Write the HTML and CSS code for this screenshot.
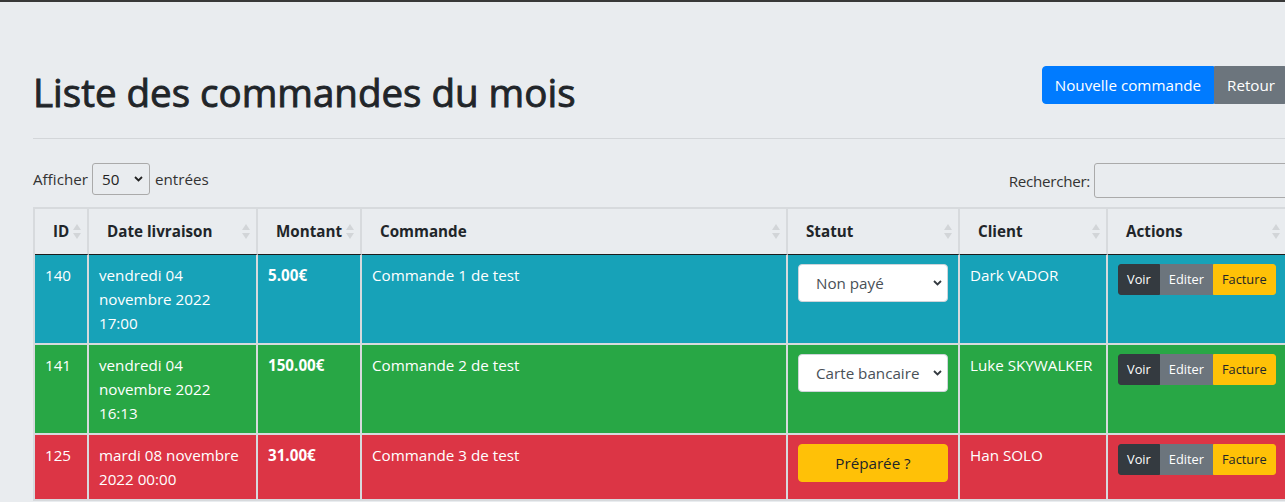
FILE: index.html
```html
<!DOCTYPE html>
<html lang="fr">
<head>
<meta charset="utf-8">
<title>Liste des commandes du mois</title>
<link rel="stylesheet" href="styles.css">
</head>
<body>
<div class="topbar"></div>
<main class="page">
  <header class="page-head">
    <h1 class="title">Liste des commandes du mois</h1>
    <div class="btn-group">
      <a class="btn btn-primary">Nouvelle commande</a>
      <a class="btn btn-secondary">Retour</a>
    </div>
  </header>

  <div class="controls">
    <label class="length">Afficher
      <span class="sel-wrap sel-len">
        <select class="len-select"><option>50</option></select>
        <svg class="chev" width="9" height="6" viewBox="0 0 9 6"><path d="M1 1l3.5 3.5L8 1" fill="none" stroke="#222" stroke-width="1.8"/></svg>
      </span>
      entrées</label>
    <label class="search">Rechercher:<input class="search-input" type="search"></label>
  </div>

  <table class="orders">
    <thead>
      <tr>
        <th class="c-id"><div class="th-in"><span>ID</span><svg class="sort" width="8" height="17" viewBox="0 0 8 17"><polygon points="0,7 4,1 8,7"/><polygon points="0,10 4,16 8,10"/></svg></div></th>
        <th class="c-date"><div class="th-in"><span>Date livraison</span><svg class="sort" width="8" height="17" viewBox="0 0 8 17"><polygon points="0,7 4,1 8,7"/><polygon points="0,10 4,16 8,10"/></svg></div></th>
        <th class="c-amount"><div class="th-in"><span>Montant</span><svg class="sort" width="8" height="17" viewBox="0 0 8 17"><polygon points="0,7 4,1 8,7"/><polygon points="0,10 4,16 8,10"/></svg></div></th>
        <th class="c-order"><div class="th-in"><span>Commande</span><svg class="sort" width="8" height="17" viewBox="0 0 8 17"><polygon points="0,7 4,1 8,7"/><polygon points="0,10 4,16 8,10"/></svg></div></th>
        <th class="c-status"><div class="th-in"><span>Statut</span><svg class="sort" width="8" height="17" viewBox="0 0 8 17"><polygon points="0,7 4,1 8,7"/><polygon points="0,10 4,16 8,10"/></svg></div></th>
        <th class="c-client"><div class="th-in"><span>Client</span><svg class="sort" width="8" height="17" viewBox="0 0 8 17"><polygon points="0,7 4,1 8,7"/><polygon points="0,10 4,16 8,10"/></svg></div></th>
        <th class="c-actions"><div class="th-in"><span>Actions</span><svg class="sort" width="8" height="17" viewBox="0 0 8 17"><polygon points="0,7 4,1 8,7"/><polygon points="0,10 4,16 8,10"/></svg></div></th>
      </tr>
    </thead>
    <tbody>
      <tr class="r-info">
        <td>140</td>
        <td>vendredi 04 novembre 2022 17:00</td>
        <td class="amount">5.00€</td>
        <td>Commande 1 de test</td>
        <td>
          <span class="sel-wrap sel-status">
            <select class="status-select"><option>Non payé</option></select>
            <svg class="chev" width="9" height="6" viewBox="0 0 9 6"><path d="M1 1l3.5 3.5L8 1" fill="none" stroke="#343a40" stroke-width="1.8"/></svg>
          </span>
        </td>
        <td class="client">Dark VADOR</td>
        <td><div class="act-group"><a class="sbtn sbtn-dark">Voir</a><a class="sbtn sbtn-gray">Editer</a><a class="sbtn sbtn-warn">Facture</a></div></td>
      </tr>
      <tr class="r-success">
        <td>141</td>
        <td>vendredi 04 novembre 2022 16:13</td>
        <td class="amount">150.00€</td>
        <td>Commande 2 de test</td>
        <td>
          <span class="sel-wrap sel-status">
            <select class="status-select"><option>Carte bancaire</option></select>
            <svg class="chev" width="9" height="6" viewBox="0 0 9 6"><path d="M1 1l3.5 3.5L8 1" fill="none" stroke="#343a40" stroke-width="1.8"/></svg>
          </span>
        </td>
        <td class="client">Luke SKYWALKER</td>
        <td><div class="act-group"><a class="sbtn sbtn-dark">Voir</a><a class="sbtn sbtn-gray">Editer</a><a class="sbtn sbtn-warn">Facture</a></div></td>
      </tr>
      <tr class="r-danger">
        <td>125</td>
        <td>mardi 08 novembre 2022 00:00</td>
        <td class="amount">31.00€</td>
        <td>Commande 3 de test</td>
        <td><a class="prep-btn">Préparée ?</a></td>
        <td class="client">Han SOLO</td>
        <td><div class="act-group"><a class="sbtn sbtn-dark">Voir</a><a class="sbtn sbtn-gray">Editer</a><a class="sbtn sbtn-warn">Facture</a></div></td>
      </tr>
    </tbody>
  </table>
</main>
</body>
</html>
```

FILE: styles.css
```css
* { box-sizing: border-box; }

html, body {
  margin: 0;
  overflow: hidden;
  background: #e9ecef;
}

body {
  font-family: "Open Sans", "Noto Sans", sans-serif;
  font-size: 15.2px;
  line-height: 24px;
  color: #212529;
}

.topbar {
  height: 2px;
  background: #383838;
}

.page {
  width: 1288px;
  padding: 64px 0 0 33px;
}

/* Title row */
.page-head {
  display: flex;
  justify-content: space-between;
  align-items: flex-start;
  border-bottom: 1px solid #d3d6d9;
}

.title {
  margin: 3px 0 23px;
  font-size: 38.5px;
  line-height: 46px;
  font-weight: 500;
  color: #212529;
  -webkit-text-stroke: 0.9px #212529;
}

.btn-group {
  display: flex;
}

.btn {
  display: inline-block;
  padding: 6px 12px;
  font-size: 15.2px;
  line-height: 24px;
  border: 1px solid transparent;
  color: #fff;
  white-space: nowrap;
}

.btn-primary {
  background: #007bff;
  border-color: #007bff;
  border-radius: 4px 0 0 4px;
}

.btn-secondary {
  background: #6c757d;
  border-color: #6c757d;
  border-radius: 0 4px 4px 0;
}

/* DataTables controls */
.controls {
  display: flex;
  justify-content: space-between;
  align-items: flex-start;
  margin-top: 24px;
  color: #333;
}

.length {
  display: flex;
  align-items: center;
  height: 32px;
}

.sel-wrap {
  position: relative;
  display: inline-block;
}

.sel-wrap .chev {
  position: absolute;
  top: 50%;
  margin-top: -3px;
  pointer-events: none;
}

.sel-len {
  margin: 0 5px 0 4px;
}

.sel-len .chev {
  right: 7px;
}

.len-select {
  appearance: none;
  -webkit-appearance: none;
  width: 58px;
  height: 32px;
  padding: 0 0 0 9px;
  border: 1px solid #aaa;
  border-radius: 3px;
  background: transparent;
  font-family: inherit;
  font-size: 15.2px;
  color: #222;
}

.search {
  display: flex;
  align-items: center;
  height: 35px;
  letter-spacing: -0.3px;
}

.search-input {
  margin-left: 4px;
  width: 194px;
  height: 35px;
  border: 1px solid #aaa;
  border-radius: 3px;
  background: transparent;
  padding: 5px;
  font-family: inherit;
  font-size: 15.2px;
}

/* Table */
.orders {
  margin-top: 9px;
  width: 1255px;
  table-layout: fixed;
  border-collapse: separate;
  border-spacing: 0;
  border-top: 2px solid #d7dadd;
  border-left: 2px solid #d7dadd;
}

.orders th,
.orders td {
  border-right: 2px solid #d7dadd;
  border-bottom: 2px solid #d7dadd;
  text-align: left;
  vertical-align: top;
}

.orders th {
  padding: 10px 6px 11px 18px;
  font-weight: 700;
  color: #212529;
  border-bottom: 1px solid #1c1c1c;
}

.c-id { width: 54px; }
.c-date { width: 169px; }
.c-amount { width: 104px; }
.c-order { width: 426px; }
.c-status { width: 172px; }
.c-client { width: 148px; }
.c-actions { width: 180px; }

.th-in {
  display: flex;
  align-items: center;
  justify-content: space-between;
}

.sort {
  flex: none;
  fill: #d2d5d8;
}

.orders td {
  padding: 8px 10px;
  color: #fff;
}

.r-info td { background: #17a2b8; }
.r-success td { background: #28a745; }
.r-danger td { background: #dc3545; }

.amount { font-weight: 700; }

.client { white-space: nowrap; }

.sel-status {
  display: block;
  margin-top: 1px;
}

.sel-status .chev {
  right: 6px;
}

.status-select {
  appearance: none;
  -webkit-appearance: none;
  display: block;
  width: 100%;
  height: 38px;
  padding: 0 26px 0 17px;
  border: 1px solid #ced4da;
  border-radius: 4px;
  background: #fff;
  font-family: inherit;
  font-size: 15.2px;
  color: #495057;
}

.prep-btn {
  display: block;
  margin-top: 1px;
  height: 38px;
  padding: 6px 12px;
  border: 1px solid #ffc107;
  border-radius: 4px;
  background: #ffc107;
  color: #212529;
  text-align: center;
  font-size: 15.2px;
  line-height: 24px;
}

.act-group {
  display: inline-flex;
  margin-top: 1px;
}

.sbtn {
  display: inline-block;
  padding: 4px 8px;
  font-size: 12.8px;
  line-height: 21px;
  border: 1px solid transparent;
  white-space: nowrap;
}

.sbtn-dark {
  background: #343a40;
  border-color: #343a40;
  color: #fff;
  border-radius: 3px 0 0 3px;
}

.sbtn-gray {
  background: #6c757d;
  border-color: #6c757d;
  color: #fff;
}

.sbtn-warn {
  background: #ffc107;
  border-color: #ffc107;
  color: #212529;
  border-radius: 0 3px 3px 0;
}
```
